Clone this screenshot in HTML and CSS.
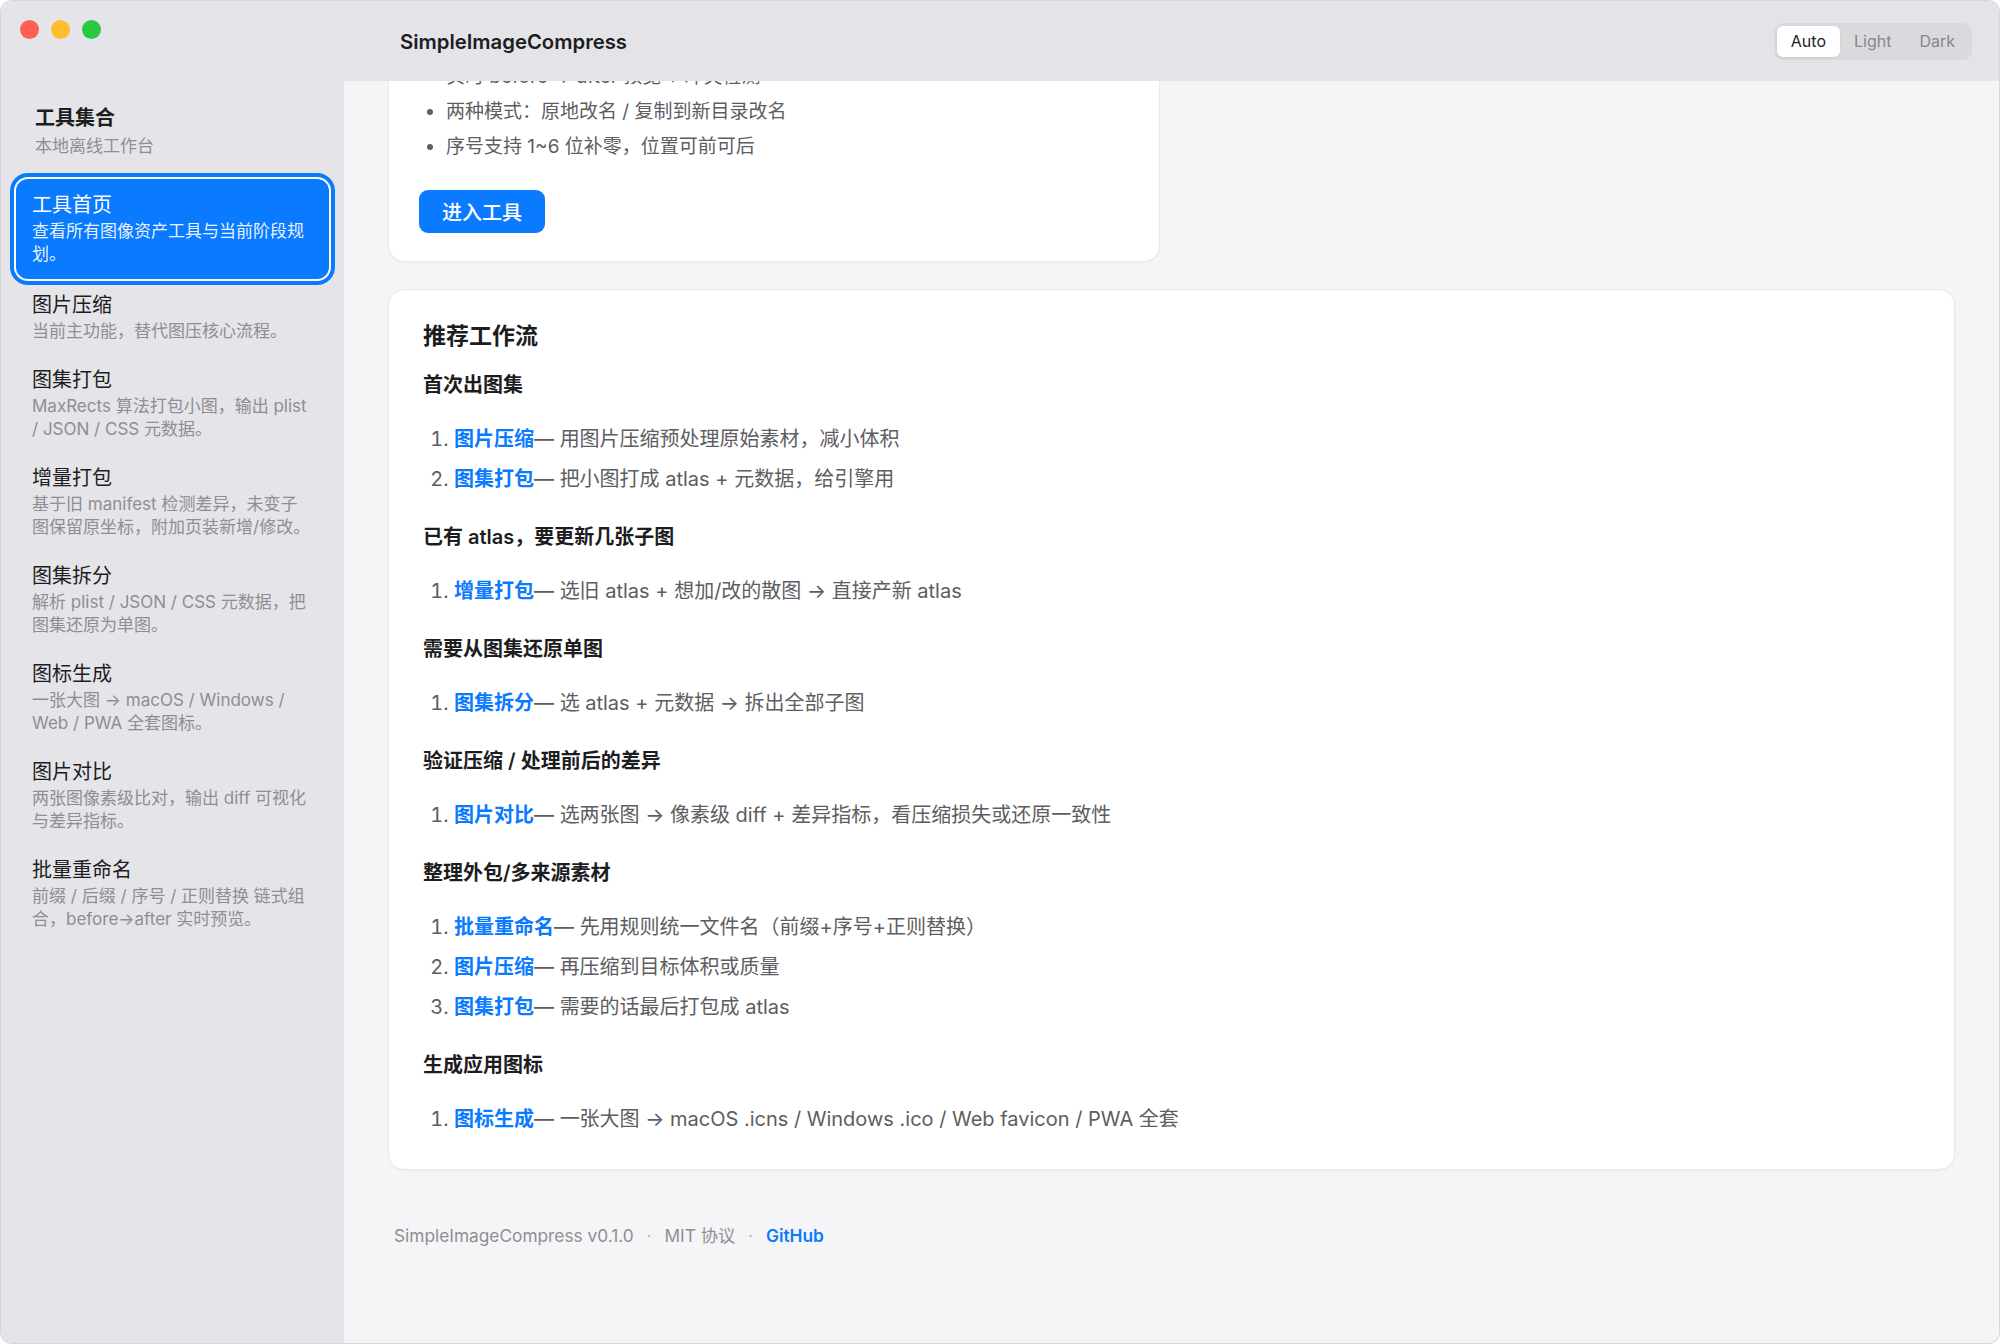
FILE: index.html
```html
<!DOCTYPE html>
<html lang="zh-CN">
<head>
  <meta charset="UTF-8">
  <meta name="viewport" content="width=device-width, initial-scale=1.0">
  <title>SimpleImageCompress</title>
  <link rel="stylesheet" href="styles.css">
</head>
<body>
  <div class="window">
    <aside class="sidebar">
      <div class="traffic">
        <span class="light red"></span>
        <span class="light yellow"></span>
        <span class="light green"></span>
      </div>

      <div class="brand">
        <div class="brand-title">工具集合</div>
        <div class="brand-sub">本地离线工作台</div>
      </div>

      <nav class="nav">
        <a class="nav-item active" href="#">
          <span class="nav-title">工具首页</span>
          <span class="nav-desc">查看所有图像资产工具与当前阶段规划。</span>
        </a>
        <a class="nav-item" href="#">
          <span class="nav-title">图片压缩</span>
          <span class="nav-desc">当前主功能，替代图压核心流程。</span>
        </a>
        <a class="nav-item" href="#">
          <span class="nav-title">图集打包</span>
          <span class="nav-desc">MaxRects 算法打包小图，输出 plist / JSON / CSS 元数据。</span>
        </a>
        <a class="nav-item" href="#">
          <span class="nav-title">增量打包</span>
          <span class="nav-desc">基于旧 manifest 检测差异，未变子图保留原坐标，附加页装新增/修改。</span>
        </a>
        <a class="nav-item" href="#">
          <span class="nav-title">图集拆分</span>
          <span class="nav-desc">解析 plist / JSON / CSS 元数据，把图集还原为单图。</span>
        </a>
        <a class="nav-item" href="#">
          <span class="nav-title">图标生成</span>
          <span class="nav-desc">一张大图 → macOS / Windows / Web / PWA 全套图标。</span>
        </a>
        <a class="nav-item" href="#">
          <span class="nav-title">图片对比</span>
          <span class="nav-desc">两张图像素级比对，输出 diff 可视化与差异指标。</span>
        </a>
        <a class="nav-item" href="#">
          <span class="nav-title">批量重命名</span>
          <span class="nav-desc">前缀 / 后缀 / 序号 / 正则替换 链式组合，before→after 实时预览。</span>
        </a>
      </nav>
    </aside>

    <main class="main">
      <header class="topbar">
        <div class="app-title">SimpleImageCompress</div>
        <div class="theme-switch">
          <button class="active">Auto</button>
          <button>Light</button>
          <button>Dark</button>
        </div>
      </header>

      <div class="content" id="content">
        <div class="tool-grid">
          <section class="card tool-card">
            <h3>批量重命名</h3>
            <p>前缀 / 后缀 / 序号 / 正则替换 链式组合，before→after 实时预览。</p>
            <ul>
              <li>实时 before → after 预览 + 冲突检测</li>
              <li>两种模式：原地改名 / 复制到新目录改名</li>
              <li>序号支持 1~6 位补零，位置可前可后</li>
            </ul>
            <button class="btn-primary">进入工具</button>
          </section>
        </div>

        <section class="card flow">
          <h2>推荐工作流</h2>

          <h3>首次出图集</h3>
          <ol>
            <li><a href="#">图片压缩</a>— 用图片压缩预处理原始素材，减小体积</li>
            <li><a href="#">图集打包</a>— 把小图打成 atlas + 元数据，给引擎用</li>
          </ol>

          <h3>已有 atlas，要更新几张子图</h3>
          <ol>
            <li><a href="#">增量打包</a>— 选旧 atlas + 想加/改的散图 → 直接产新 atlas</li>
          </ol>

          <h3>需要从图集还原单图</h3>
          <ol>
            <li><a href="#">图集拆分</a>— 选 atlas + 元数据 → 拆出全部子图</li>
          </ol>

          <h3>验证压缩 / 处理前后的差异</h3>
          <ol>
            <li><a href="#">图片对比</a>— 选两张图 → 像素级 diff + 差异指标，看压缩损失或还原一致性</li>
          </ol>

          <h3>整理外包/多来源素材</h3>
          <ol>
            <li><a href="#">批量重命名</a>— 先用规则统一文件名（前缀+序号+正则替换）</li>
            <li><a href="#">图片压缩</a>— 再压缩到目标体积或质量</li>
            <li><a href="#">图集打包</a>— 需要的话最后打包成 atlas</li>
          </ol>

          <h3>生成应用图标</h3>
          <ol>
            <li><a href="#">图标生成</a>— 一张大图 → macOS .icns / Windows .ico / Web favicon / PWA 全套</li>
          </ol>
        </section>

        <footer class="footer">
          <span>SimpleImageCompress v0.1.0</span>
          <span class="sep">·</span>
          <span>MIT 协议</span>
          <span class="sep">·</span>
          <a href="#">GitHub</a>
        </footer>
      </div>
    </main>
  </div>

  <script>
    // keep the page scrolled down to the workflow section
    const content = document.getElementById('content');
    const lastCard = document.querySelector('.tool-card:last-child');
    content.scrollTop = lastCard.getBoundingClientRect().bottom - 262;
  </script>
</body>
</html>
```

FILE: styles.css
```css
/* General Styles */
* {
  box-sizing: border-box;
}

html,
body {
  margin: 0;
  height: 100%;
}

body {
  font-family: "Inter", "Noto Sans CJK SC", sans-serif;
  background-color: #fff;
  color: #1d1d1f;
}

a {
  text-decoration: none;
}

.window {
  display: flex;
  height: 100vh;
  border: 1px solid rgba(0, 0, 0, 0.12);
  border-radius: 12px;
  overflow: hidden;
  background-color: #f5f5f7;
}

/* Sidebar */
.sidebar {
  width: 343px;
  flex-shrink: 0;
  background-color: #e5e4e8;
  padding: 19px 15px 0;
}

.traffic {
  display: flex;
  gap: 12px;
  margin-left: 4px;
}

.light {
  width: 19px;
  height: 19px;
  border-radius: 50%;
}

.light.red {
  background-color: #ff5f57;
}

.light.yellow {
  background-color: #febc2e;
}

.light.green {
  background-color: #28c840;
}

.brand {
  margin-top: 65px;
  padding-left: 19px;
}

.brand-title {
  font-size: 20px;
  line-height: 28px;
  font-weight: 700;
}

.brand-sub {
  margin-top: 2px;
  font-size: 17px;
  line-height: 24px;
  color: #8e8e93;
}

.nav {
  margin-top: 21px;
}

.nav-item {
  display: block;
  padding: 12px 16px 11px;
  border-radius: 12px;
  color: #1d1d1f;
}

.nav-title {
  display: block;
  font-size: 20px;
  line-height: 28px;
}

.nav-desc {
  display: block;
  margin-top: 1px;
  font-size: 17px;
  line-height: 23px;
  color: #8e8e93;
}

.nav-item.active {
  padding-bottom: 13px;
  background-color: #0a7aff;
  color: #fff;
  box-shadow: 0 0 0 2px #fff, 0 0 0 6px #0a7aff;
}

.nav-item.active .nav-desc {
  color: rgba(255, 255, 255, 0.92);
}

/* Main */
.main {
  flex: 1;
  display: flex;
  flex-direction: column;
  min-width: 0;
}

.topbar {
  height: 80px;
  flex-shrink: 0;
  display: flex;
  align-items: center;
  justify-content: space-between;
  padding: 0 27px 0 56px;
  background-color: #e4e3e7;
}

.app-title {
  font-size: 20.3px;
  font-weight: 600;
}

.theme-switch {
  display: flex;
  padding: 3px;
  border-radius: 9px;
  background-color: #dad9de;
}

.theme-switch button {
  height: 31px;
  padding: 0 14px;
  border: none;
  border-radius: 6px;
  background: none;
  font-family: inherit;
  font-size: 16px;
  color: #86868b;
  cursor: pointer;
}

.theme-switch button.active {
  background-color: #fff;
  color: #1d1d1f;
  box-shadow: 0 1px 2px rgba(0, 0, 0, 0.08);
}

.content {
  flex: 1;
  overflow: auto;
  padding: 0 44px 240px;
  scrollbar-width: none;
}

.content::-webkit-scrollbar {
  display: none;
}

/* Cards */
.card {
  background-color: #fff;
  border: 1px solid #e9e9ec;
  border-radius: 16px;
  box-shadow: 0 1px 2px rgba(0, 0, 0, 0.04);
}

.tool-grid {
  display: grid;
  grid-template-columns: 1fr 1fr;
  gap: 24px;
  margin-top: 28px;
  margin-bottom: 27px;
}

.tool-card {
  padding: 28px 30px;
}

.tool-card h3 {
  margin: 0 0 8px;
  font-size: 22px;
  line-height: 30px;
  font-weight: 600;
}

.tool-card p {
  margin: 0 0 16px;
  font-size: 18px;
  line-height: 26px;
  color: #8e8e93;
}

.tool-card ul {
  margin: 0 0 29px;
  padding-left: 27px;
  font-size: 19px;
  line-height: 28px;
  color: #5d5d62;
}

.tool-card li + li {
  margin-top: 7px;
}

.btn-primary {
  height: 43px;
  padding: 0 23px;
  border: none;
  border-radius: 9px;
  background-color: #0a7aff;
  color: #fff;
  font-family: inherit;
  font-size: 20px;
  font-weight: 500;
  cursor: pointer;
}

/* Workflow */
.flow {
  padding: 31px 34px 35px;
}

.flow h2 {
  margin: 0 0 20px;
  font-size: 23px;
  line-height: 30px;
  font-weight: 600;
}

.flow h3 {
  margin: 0 0 25px;
  font-size: 20px;
  line-height: 28px;
  font-weight: 600;
}

.flow ol {
  margin: 0 0 29px;
  padding-left: 31px;
  font-size: 20px;
  line-height: 30px;
  color: #5d5d62;
}

.flow ol:last-child {
  margin-bottom: 0;
}

.flow li + li {
  margin-top: 10px;
}

.flow a {
  color: #0a7aff;
  font-weight: 600;
}

/* Footer */
.footer {
  margin-top: 54px;
  padding-left: 6px;
  font-size: 17.3px;
  line-height: 24px;
  color: #8e8e93;
}

.footer .sep {
  margin: 0 8px;
  color: #b5b5ba;
}

.footer a {
  color: #0a7aff;
  font-weight: 600;
}
```
